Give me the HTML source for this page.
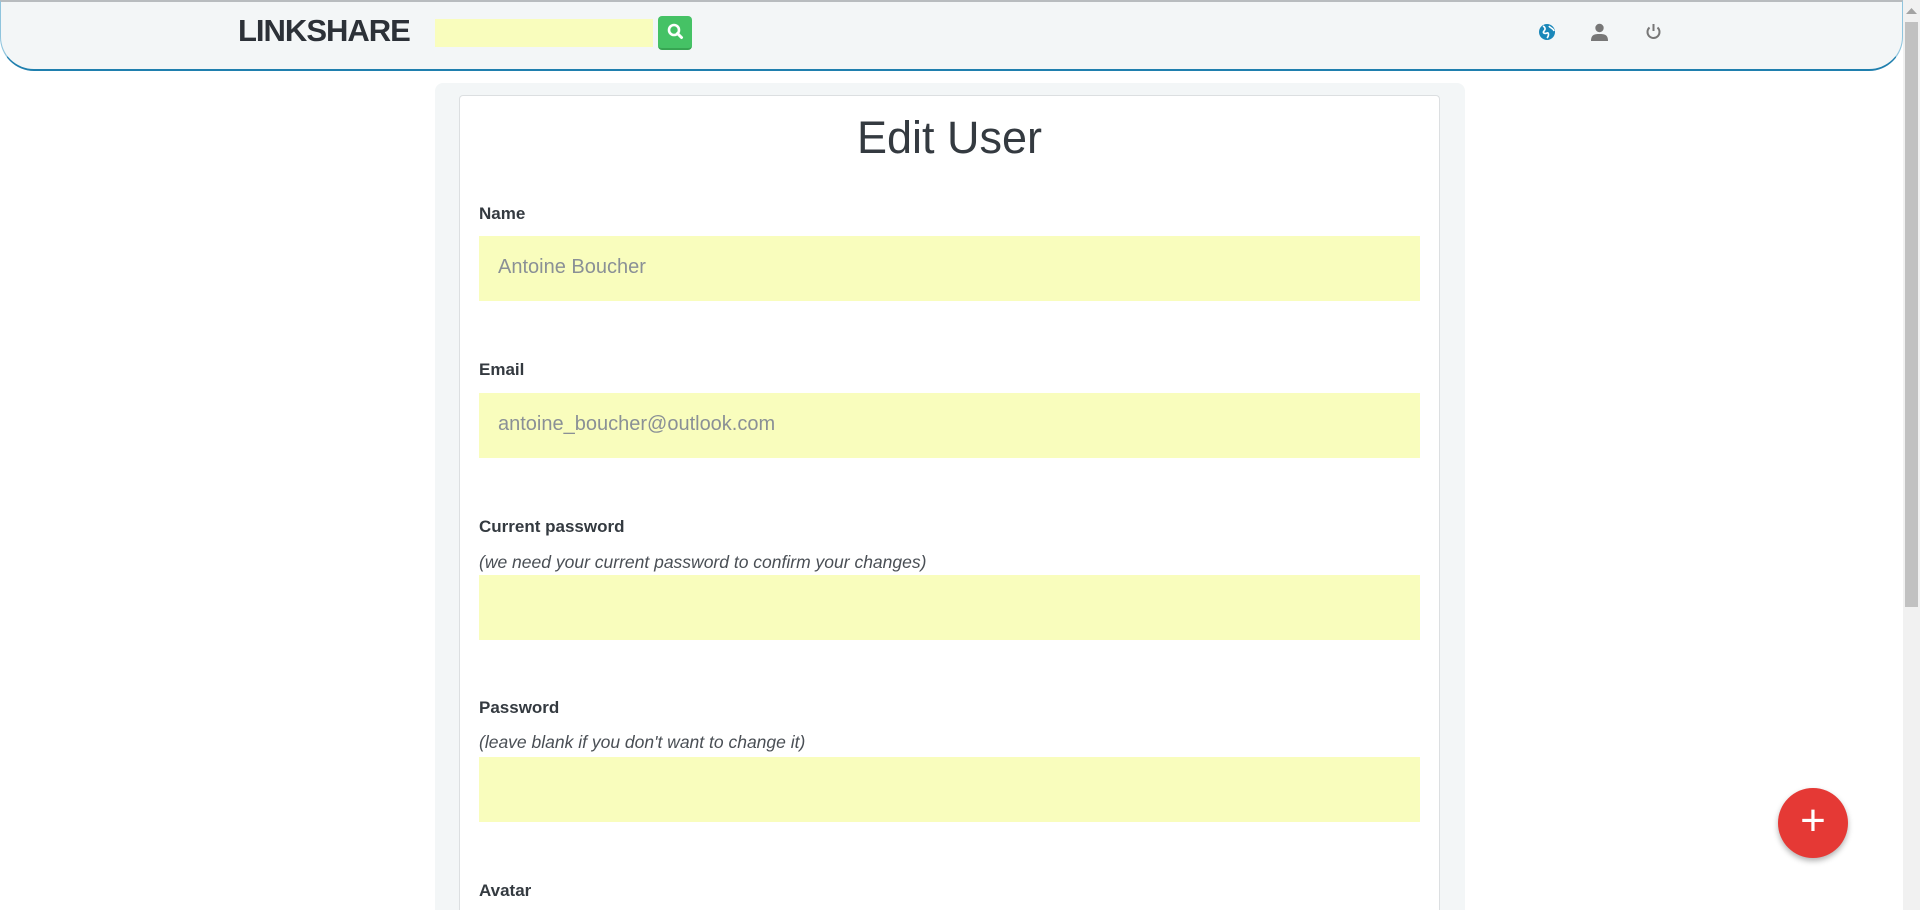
<!DOCTYPE html>
<html style="overflow:hidden;height:910px"><head><style>
*{box-sizing:border-box;margin:0;padding:0}
html,body{width:1920px;height:910px;overflow:hidden}
body{background:#fff;font-family:"Liberation Sans",sans-serif;color:#343a40;position:relative}
.hdr{position:absolute;left:0;top:0;width:1903px;height:71px;background:#f3f6f7;border-top:2px solid #b8bcbf;border-bottom:2px solid #1f7fae;border-radius:0 0 34px 34px;border-left:1px solid #8fc4dd;border-right:1px solid #8fc4dd}
.logo{position:absolute;left:238px;top:13px;font-size:31px;font-weight:bold;letter-spacing:-1px;color:#2c3138}
.srch{position:absolute;left:435px;top:19px;width:218px;height:28px;background:#f9fdbd}
.btn{position:absolute;left:658px;top:16px;width:34px;height:34px;background:#45c265;border-radius:4px;border-bottom:2px solid #37a552}
.ic{position:absolute;top:23px}
.panel{position:absolute;left:435px;top:83px;width:1030px;height:827px;background:#f3f6f7;border-radius:8px 8px 0 0}
.card{position:absolute;left:459px;top:95px;width:981px;height:815px;background:#fff;border:1px solid #dcdfe1;border-bottom:none;border-radius:4px 4px 0 0}
h1{position:absolute;left:459px;width:981px;top:112px;text-align:center;font-weight:300;font-size:45px;color:#343a40}
.lbl{position:absolute;left:479px;font-size:17px;font-weight:bold;color:#343a40}
.hint{position:absolute;left:479px;font-size:17.5px;font-style:italic;color:#4a4f55}
.inp{position:absolute;left:479px;width:941px;height:65px;background:#f9fdbd;font-size:20px;color:#8a9096;padding:20px 19px}
.fab{position:absolute;left:1778px;top:788px;width:70px;height:70px;border-radius:50%;background:#e53935;box-shadow:0 3px 6px rgba(0,0,0,.3);color:#fff;font-size:44px;line-height:66px;text-align:center}
.sb{position:absolute;left:1903px;top:0;width:17px;height:910px;background:#f1f1f1}
.th{position:absolute;left:1905px;top:22px;width:13px;height:585px;background:#c1c1c1}
</style></head><body>
<div class="hdr"></div>
<div class="logo">LINKSHARE</div>
<div class="srch"></div>
<div class="btn"><svg width="34" height="32" viewBox="0 0 34 32"><circle cx="16" cy="14" r="5" fill="none" stroke="#fff" stroke-width="2.6"/><path d="M19.5 17.5l4 4" stroke="#fff" stroke-width="3" stroke-linecap="round"/></svg></div>
<svg class="ic" style="left:1538px" width="18" height="18" viewBox="0 0 18 18"><circle cx="9" cy="9" r="8" fill="#1a87b9"/><path d="M5 3c2 1 3 3 1 5s1 3 3 2 2 3 0 5M11 3c1 2 4 2 5 5" stroke="#fff" stroke-width="1.6" fill="none"/></svg>
<svg class="ic" style="left:1591px" width="17" height="18" viewBox="0 0 17 18"><circle cx="8.5" cy="5" r="4.2" fill="#777"/><path d="M0 18c0-6 3-7 8.5-7s8.5 1 8.5 7z" fill="#777"/></svg>
<svg class="ic" style="left:1645px" width="17" height="18" viewBox="0 0 17 18"><path d="M4.5 4.5a6 6 0 1 0 8 0" stroke="#777" stroke-width="2" fill="none"/><path d="M8.5 1v7" stroke="#777" stroke-width="2"/></svg>
<div class="panel"></div>
<div class="card"></div>
<h1>Edit User</h1>
<div class="lbl" style="top:204px">Name</div>
<div class="inp" style="top:236px">Antoine Boucher</div>
<div class="lbl" style="top:360px">Email</div>
<div class="inp" style="top:393px">antoine_boucher@outlook.com</div>
<div class="lbl" style="top:517px">Current password</div>
<div class="hint" style="top:552px">(we need your current password to confirm your changes)</div>
<div class="inp" style="top:575px"></div>
<div class="lbl" style="top:698px">Password</div>
<div class="hint" style="top:732px">(leave blank if you don't want to change it)</div>
<div class="inp" style="top:757px"></div>
<div class="lbl" style="top:881px">Avatar</div>
<div class="fab">+</div>
<div class="sb"></div><div class="th"></div>
<svg style="position:absolute;left:1906px;top:8px" width="11" height="7"><path d="M0 6L5.5 0 11 6z" fill="#a3a3a3"/></svg>
</body></html>
